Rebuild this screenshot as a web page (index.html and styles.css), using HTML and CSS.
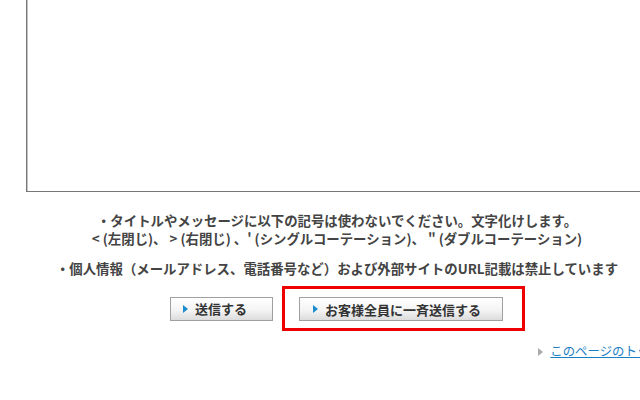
FILE: index.html
```html
<!DOCTYPE html>
<html lang="ja">
<head>
    <meta charset="UTF-8">
    <meta name="viewport" content="width=device-width, initial-scale=1.0">
    <title>メッセージ送信</title>
    <link rel="stylesheet" href="styles.css">
</head>
<body>
    <div class="page">
        <!-- Message Body -->
        <div class="msg-box">
            <textarea class="msg-text" name="message"></textarea>
        </div>

        <!-- Notes -->
        <div class="notes">
            <p>・タイトルやメッセージに以下の記号は使わないでください。文字化けします。<br>
            &lt; (左閉じ)、 &gt; (右閉じ) 、' (シングルコーテーション)、 " (ダブルコーテーション)</p>
            <p>・個人情報（メールアドレス、電話番号など）および外部サイトのURL記載は禁止しています</p>
        </div>

        <!-- Send Buttons -->
        <div class="btn-row">
            <button type="submit" class="send-btn"><span class="arrow"></span>送信する</button>
            <div class="all-box">
                <button type="submit" class="send-btn send-all"><span class="arrow"></span>お客様全員に一斉送信する</button>
            </div>
        </div>

        <div class="pagetop">
            <span class="gray-arrow"></span><a href="#">このページのトップへ</a>
        </div>
    </div>
</body>
</html>
```
FILE: styles.css
```css
html, body {
    margin: 0;
    padding: 0;
    background: #fff;
    overflow: hidden;
}

body {
    font-family: "Noto Sans CJK JP", "Liberation Sans", sans-serif;
    color: #444;
}

/* Wide page, wider than the window */
.page {
    width: 674px;
}

/* Message Textarea */
.msg-box {
    padding-left: 26px;
    margin-top: -20px;
}

.msg-text {
    display: block;
    width: 680px;
    height: 202px;
    margin: 0;
    padding: 4px;
    border: 1px solid #777;
    box-shadow: inset 1px 1px 0 #c4c4c4;
    background: #fff;
    resize: none;
}

/* Notes */
.notes {
    margin-top: 19px;
    text-align: center;
    font-size: 13.4px;
    font-weight: bold;
    line-height: 18px;
}

.notes p {
    margin: 0 0 12px;
}

/* Buttons */
.btn-row {
    display: flex;
    align-items: center;
    margin-left: 170px;
    margin-top: -3px;
}

.send-btn {
    display: flex;
    align-items: center;
    height: 24px;
    padding: 0 0 0 12px;
    border: 1px solid #a0a0a0;
    border-radius: 0;
    background: linear-gradient(#ffffff, #f4f4f4 55%, #dcdcdc);
    font-family: "Noto Sans CJK JP", "Liberation Sans", sans-serif;
    font-size: 13px;
    font-weight: bold;
    color: #333;
    width: 103px;
    cursor: pointer;
}

.send-all {
    width: 204px;
    padding-left: 13px;
}

.arrow {
    width: 0;
    height: 0;
    margin-right: 7px;
    border-top: 4px solid transparent;
    border-bottom: 4px solid transparent;
    border-left: 5px solid #1a8ccc;
}

.all-box {
    margin-left: 9px;
    width: 204px;
    padding: 8px 19px 7px 14px;
    border: 3px solid #ee0000;
}

/* Page Top Link */
.pagetop {
    margin-top: 11px;
    text-align: right;
    font-size: 12.4px;
}

.pagetop a {
    color: #1a7ec4;
    text-decoration: underline;
}

.gray-arrow {
    display: inline-block;
    width: 0;
    height: 0;
    margin-right: 7px;
    border-top: 4px solid transparent;
    border-bottom: 4px solid transparent;
    border-left: 5px solid #aaa;
}
```
